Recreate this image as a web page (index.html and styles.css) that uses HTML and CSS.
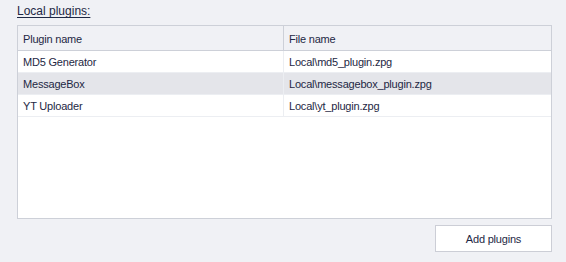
FILE: index.html
```html
<!DOCTYPE html>
<html>
  <head>
    <title>Local plugins</title>
    <link rel="stylesheet" href="styles.css">
  </head>
  <body>
    <div class="panel">
      <div class="caption"><span>Local plugins:</span></div>
      <div class="grid">
        <table class="plugins">
          <tr class="head">
            <th class="col-name">Plugin name</th>
            <th>File name</th>
          </tr>
          <tr>
            <td>MD5 Generator</td>
            <td>Local\md5_plugin.zpg</td>
          </tr>
          <tr class="selected">
            <td>MessageBox</td>
            <td>Local\messagebox_plugin.zpg</td>
          </tr>
          <tr>
            <td>YT Uploader</td>
            <td>Local\yt_plugin.zpg</td>
          </tr>
        </table>
      </div>
      <div class="actions">
        <button type="button" class="add-button">Add plugins</button>
      </div>
    </div>
  </body>
</html>
```
FILE: styles.css
```css
body {
  margin: 0;
  padding: 0;
  background-color: #f0f1f5;
  font-family: "Liberation Sans", Arial, sans-serif;
  font-size: 11px;
  letter-spacing: -0.2px;
  color: #1e2844;
}
.panel {
  padding: 4px 14px 0 17px;
}
.caption {
  height: 21px;
  line-height: 15px;
}
.caption span {
  text-decoration: underline;
  text-underline-offset: 2px;
  font-size: 12px;
  letter-spacing: 0;
}
.grid {
  background-color: #fff;
  border: 1px solid #cdd0d8;
  height: 192px;
}
.plugins {
  border-collapse: collapse;
  width: 100%;
  font-size: 11px;
}
.plugins th {
  background-color: #f0f1f5;
  font-weight: normal;
  text-align: left;
  height: 23px;
  padding: 1px 0 0 5px;
  border-bottom: 1px solid #cdd0d8;
}
.plugins th.col-name {
  width: 260px;
  border-right: 1px solid #cdd0d8;
}
.plugins td {
  height: 20px;
  padding: 1px 0 0 5px;
  border-bottom: 1px solid #eceef2;
}
.plugins td:first-child {
  border-right: 1px solid #eceef2;
}
.plugins tr.selected td {
  background-color: #e4e5ea;
}
.actions {
  display: flex;
  justify-content: flex-end;
  padding-top: 6px;
}
.add-button {
  width: 117px;
  height: 27px;
  background-color: #fff;
  border: 1px solid #ccced6;
  font-family: "Liberation Sans", Arial, sans-serif;
  font-size: 11px;
  letter-spacing: -0.2px;
  color: #1e2844;
  padding: 0;
}
```
